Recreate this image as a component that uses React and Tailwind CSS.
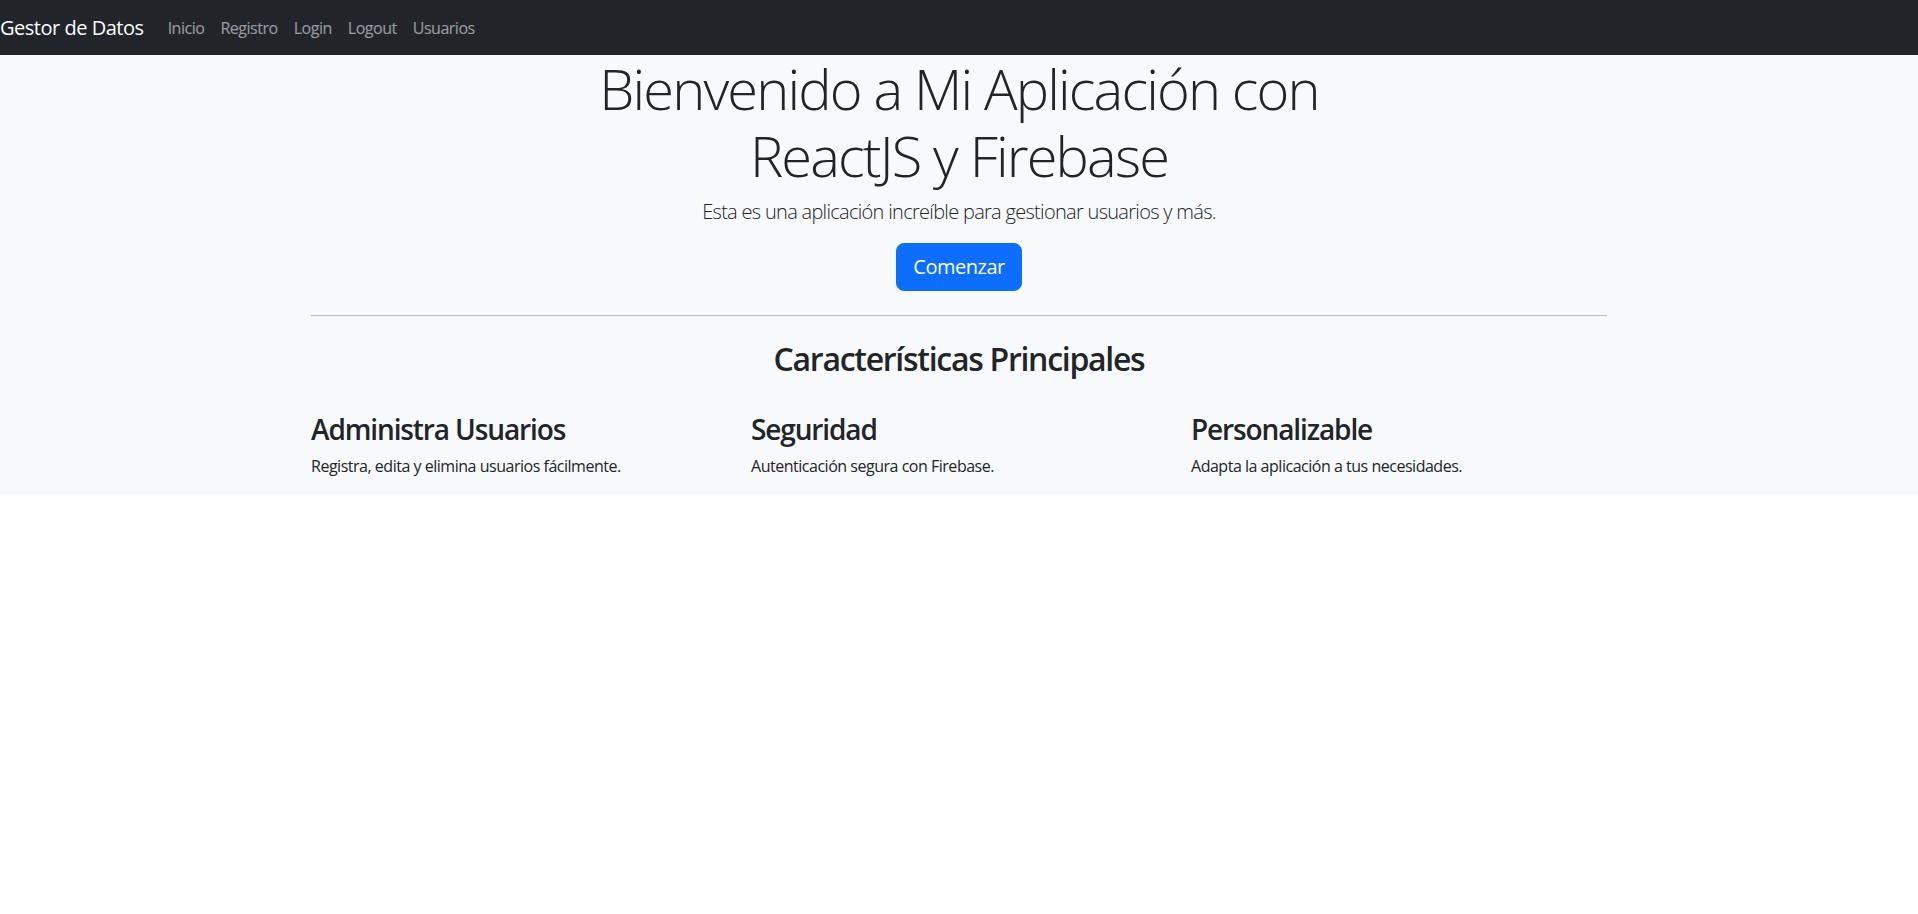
export default function App() {
  const features = [
    { title: "Administra Usuarios", text: "Registra, edita y elimina usuarios fácilmente." },
    { title: "Seguridad", text: "Autenticación segura con Firebase." },
    { title: "Personalizable", text: "Adapta la aplicación a tus necesidades." },
  ];

  return (
    <div className="min-h-screen bg-white text-[#212529] font-['Open_Sans',sans-serif] text-base leading-normal tracking-[-0.03em]">
      <nav className="bg-[#212529] h-[55px] flex items-center">
        <a href="#" className="text-white text-xl leading-[30px] mr-4">
          Gestor de Datos
        </a>
        <ul className="flex">
          {["Inicio", "Registro", "Login", "Logout", "Usuarios"].map((l) => (
            <li key={l}>
              <a href="#" className="block px-2 py-2 text-white/55 hover:text-white/75">
                {l}
              </a>
            </li>
          ))}
        </ul>
      </nav>

      <div className="bg-[#f8f9fa]">
        <div className="max-w-[1320px] mx-auto px-3 text-center">
          <h1 className="max-w-[840px] mx-auto text-[56px] font-light leading-[1.2] mb-2 tracking-[-0.033em]">
            Bienvenido a Mi Aplicación con ReactJS y Firebase
          </h1>
          <p className="text-xl font-light leading-[30px] mb-4 tracking-[-0.035em]">
            Esta es una aplicación increíble para gestionar usuarios y más.
          </p>
          <button className="bg-[#0d6efd] hover:bg-[#0b5ed7] text-white text-xl leading-[30px] px-4 py-2 rounded-lg border border-[#0d6efd]">
            Comenzar
          </button>
          <hr className="my-6 border-0 border-t border-black/25" />
          <h2 className="text-[32px] font-semibold leading-[1.2] mb-[34px] tracking-[-0.04em]">
            Características Principales
          </h2>
          <div className="grid grid-cols-3 -mx-3 text-left">
            {features.map((f) => (
              <div key={f.title} className="px-3">
                <h3 className="text-[28px] font-semibold leading-[1.2] mb-2 tracking-[-0.04em]">{f.title}</h3>
                <p className="mb-4">{f.text}</p>
              </div>
            ))}
          </div>
        </div>
      </div>
    </div>
  );
}
